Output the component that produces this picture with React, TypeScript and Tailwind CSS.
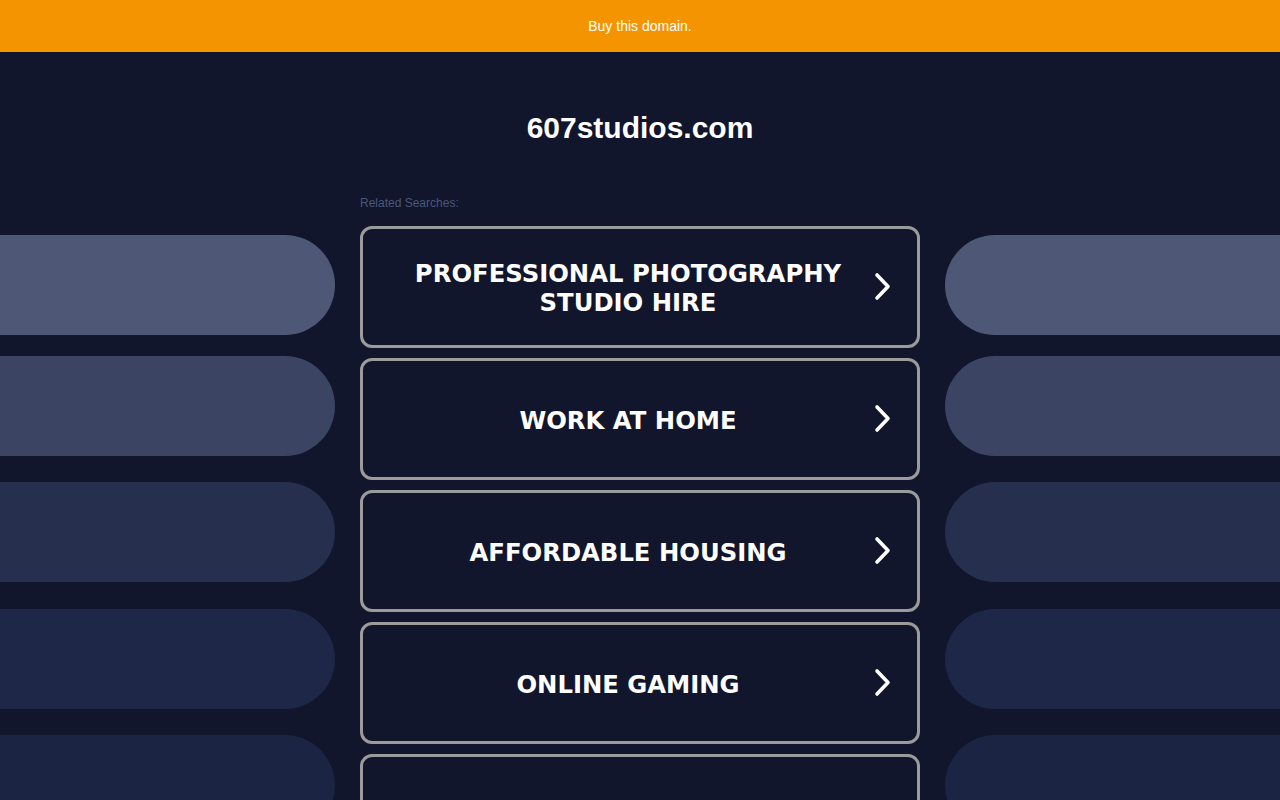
import React from 'react';

const searches = [
  ['PROFESSIONAL PHOTOGRAPHY', 'STUDIO HIRE'],
  ['WORK AT HOME'],
  ['AFFORDABLE HOUSING'],
  ['ONLINE GAMING'],
  [''],
];

const pills = [
  { color: 'bg-[#4e5876]', mt: 'mt-0' },
  { color: 'bg-[#3b4462]', mt: 'mt-[21px]' },
  { color: 'bg-[#262f4d]', mt: 'mt-[26px]' },
  { color: 'bg-[#1e2747]', mt: 'mt-[27px]' },
  { color: 'bg-[#1c2443]', mt: 'mt-[26px]' },
];

function Chevron() {
  return (
    <svg width="20" height="30" viewBox="0 0 20 30" className="shrink-0">
      <polyline
        points="4,3 15,14.5 4,26"
        fill="none"
        stroke="white"
        strokeWidth="3.6"
        strokeLinecap="round"
        strokeLinejoin="round"
      />
    </svg>
  );
}

function SideColumn({ side }: { side: 'left' | 'right' }) {
  return (
    <div className="flex flex-col pt-[90px]">
      {pills.map((p, i) => (
        <div
          key={i}
          className={`h-[100px] ${p.color} ${p.mt} ${
            side === 'left' ? 'rounded-r-[50px]' : 'rounded-l-[50px]'
          }`}
        />
      ))}
    </div>
  );
}

export default function App() {
  return (
    <div
      className="w-full h-[800px] overflow-hidden bg-[#11162c]"
      style={{ fontFamily: '"Liberation Sans", Arial, sans-serif' }}
    >
      {/* Top bar */}
      <div className="h-[52px] bg-[#f39400] flex items-center justify-center">
        <span className="text-[14px] text-white">Buy this domain.</span>
      </div>

      {/* Title */}
      <div className="pt-[59px] text-center">
        <h1 className="text-[30px] leading-[34px] font-bold text-white">607studios.com</h1>
      </div>

      {/* Content */}
      <div className="grid grid-cols-[335px_560px_335px] gap-x-[25px]">
        <SideColumn side="left" />

        <div className="flex flex-col">
          <p className="mt-[52px] mb-[17px] text-[12px] leading-[12px] text-[#4b5679]">
            Related Searches:
          </p>
          <div className="flex flex-col gap-[10px]">
            {searches.map((lines, i) => (
              <div
                key={i}
                className="h-[122px] border-[3px] border-[#9b9b9b] rounded-[12px] flex items-center pl-[20px] pr-[24px]"
              >
                <div
                  className="flex-1 pt-[2px] text-center text-white font-bold text-[24.3px] leading-[29px]"
                  style={{ fontFamily: '"DejaVu Sans", Verdana, sans-serif' }}
                >
                  {lines.map((l, j) => (
                    <div key={j}>{l}</div>
                  ))}
                </div>
                <Chevron />
              </div>
            ))}
          </div>
        </div>

        <SideColumn side="right" />
      </div>
    </div>
  );
}
